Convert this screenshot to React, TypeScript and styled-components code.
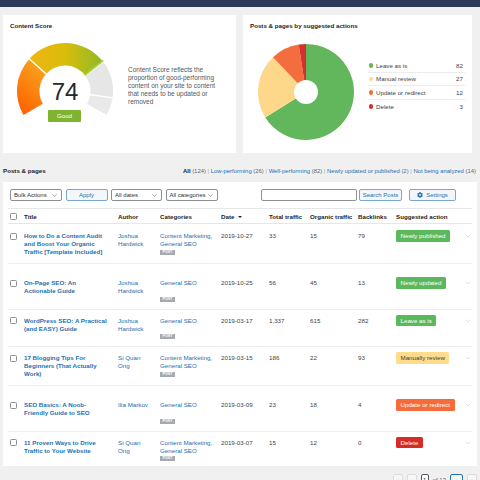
import React from 'react'
import styled, { createGlobalStyle } from 'styled-components'
import { FaCog } from 'react-icons/fa'
import { ChevronDown } from 'lucide-react'

const GlobalStyle = createGlobalStyle`
  html, body {
    margin: 0;
    padding: 0;
    overflow: hidden;
    background: #f0f0f1;
  }
  body {
    font-family: 'Liberation Sans', Arial, sans-serif;
    color: #3c434a;
  }
  * {
    box-sizing: border-box;
  }
`

const Page = styled.div`
  width: 480px;
  height: 480px;
  overflow: hidden;
`

const TopBar = styled.div`
  height: 7px;
  background: #2c3a57;
  overflow: hidden;
  padding-left: 10px;

  span {
    display: block;
    font-size: 8px;
    line-height: 10px;
    margin-top: -7px;
    color: #c6ccd6;
  }
`

const CardsRow = styled.div`
  display: flex;
  gap: 7px;
  padding: 8px 8px 0 3px;
`

const Card = styled.section<{ $w: number }>`
  width: ${(p) => p.$w}px;
  height: 138px;
  background: #fff;
  padding: 7px;
`

const CardTitle = styled.h3`
  margin: 0;
  font-size: 6.2px;
  line-height: 8px;
  font-weight: 700;
  color: #1d2327;
`

const CardBody = styled.div`
  display: flex;
  align-items: flex-start;
`

const GaugeWrap = styled.div`
  position: relative;
  width: 104px;
  height: 82px;
  margin: 11px 0 0 3px;
  flex-shrink: 0;

  svg {
    display: block;
  }
`

const ScoreValue = styled.div`
  position: absolute;
  left: 0;
  right: 0;
  top: 39px;
  text-align: center;
  font-size: 24px;
  line-height: 24px;
  color: #23282d;
`

const ScoreBadge = styled.div`
  position: absolute;
  left: 35px;
  top: 69px;
  width: 33px;
  height: 11.5px;
  border-radius: 1px;
  background: #7fb42f;
  color: #fff;
  font-size: 6.2px;
  line-height: 11.5px;
  text-align: center;
`

const Description = styled.p`
  margin: 36px 0 0 11px;
  width: 92px;
  font-size: 6.5px;
  line-height: 7.9px;
  color: #50575e;
`

const PieSvg = styled.svg`
  display: block;
  flex-shrink: 0;
  margin: 12px 0 0 6px;
`

const Legend = styled.ul`
  list-style: none;
  margin: 29px 0 0 12px;
  padding: 0;
  width: 97px;
`

const LegendRow = styled.li`
  display: flex;
  align-items: center;
  height: 13.5px;
  padding-right: 2px;
  font-size: 6.2px;
  color: #3c434a;
  border-bottom: 1px solid #ececec;

  &:last-child {
    border-bottom: none;
  }
`

const Dot = styled.span<{ $c: string }>`
  width: 4.5px;
  height: 4.5px;
  border-radius: 50%;
  background: ${(p) => p.$c};
  margin: 0 3px 0 0.5px;
`

const LegendLabel = styled.span`
  flex: 1;
`

const SectionHead = styled.div`
  display: flex;
  justify-content: space-between;
  align-items: center;
  margin-top: 14px;
  padding: 0 4px 0 3px;
  height: 8px;
`

const SectionTitle = styled.h2`
  margin: 0;
  font-size: 6.2px;
  line-height: 8px;
  font-weight: 700;
  color: #1d2327;
`

const Filters = styled.div`
  font-size: 5.9px;
  line-height: 8px;
  color: #a7aaad;
  white-space: nowrap;

  a {
    color: #2271b1;
    text-decoration: none;
  }

  b {
    color: #1d2327;
  }

  em {
    font-style: normal;
    color: #646970;
  }
`

const TableCard = styled.section`
  margin: 7px 3px 0;
  height: 284px;
  background: #fff;
  padding: 7px 5px 0;
  overflow: hidden;
`

const Toolbar = styled.div`
  display: flex;
  justify-content: space-between;
  height: 12px;
  padding: 0 16px 0 2px;
`

const ToolGroup = styled.div`
  display: flex;
  gap: 3.5px;
`

const SelectBox = styled.div<{ $w: number }>`
  width: ${(p) => p.$w}px;
  height: 12px;
  border: 1px solid #8c8f94;
  border-radius: 2px;
  background: #fff;
  display: flex;
  align-items: center;
  justify-content: space-between;
  padding: 0 3px;
  font-size: 6px;
  color: #2c3338;
`

const Button = styled.div<{ $w: number }>`
  width: ${(p) => p.$w}px;
  height: 12px;
  border: 1px solid #7aa7d0;
  border-radius: 2px;
  background: #f3f7fb;
  display: flex;
  align-items: center;
  justify-content: center;
  gap: 3px;
  font-size: 6px;
  color: #2271b1;
`

const SettingsButton = styled(Button)`
  margin-left: 3.5px;
`

const SearchInput = styled.div`
  width: 96px;
  height: 12px;
  border: 1px solid #8c8f94;
  border-radius: 2px;
  background: #fff;
  margin-right: -1.5px;
`

const GRID = '14px 94px 42px 61px 48px 41px 48px 38px 67px 1fr'

const HeaderRow = styled.div`
  display: grid;
  grid-template-columns: ${GRID};
  align-items: center;
  height: 16px;
  margin-top: 7px;
  padding-left: 2px;
  border-top: 1px solid #e6e7e9;
  border-bottom: 1px solid #e6e7e9;
  font-size: 6.2px;
  font-weight: 700;
  color: #1d2327;
`

const Caret = styled.span`
  display: inline-block;
  margin-left: 2px;
  border-left: 2px solid transparent;
  border-right: 2px solid transparent;
  border-top: 2.5px solid #1d2327;
  vertical-align: 1px;
`

const Row = styled.div<{ $pt: number }>`
  display: grid;
  grid-template-columns: ${GRID};
  align-items: start;
  padding: ${(p) => p.$pt}px 0 7px 2px;
  border-bottom: 1px solid #eceef0;
  font-size: 6.2px;
  line-height: 8px;

  &:last-child {
    border-bottom: none;
  }
`

const Check = styled.span`
  display: block;
  width: 7px;
  height: 7px;
  margin-top: 0.5px;
  border: 1px solid #8c8f94;
  border-radius: 1.5px;
  background: #fff;
`

const TitleLink = styled.a`
  color: #2271b1;
  font-weight: 700;
  text-decoration: none;
`

const Author = styled.div`
  max-width: 33px;
  color: #2271b1;
`

const Categories = styled.div`
  color: #2271b1;

  div {
    max-width: 56px;
    min-height: 16px;
  }
`

const PostTag = styled.span`
  display: block;
  width: 15px;
  height: 5px;
  margin-top: 1.5px;
  background: #a7aaad;
  color: #fff;
  font-size: 3.6px;
  line-height: 5px;
  font-weight: 700;
  text-align: center;
`

const Num = styled.div`
  color: #3c434a;
`

const ACTIONS: Record<string, { bg: string; fg: string }> = {
  'Newly published': { bg: '#5cb85c', fg: '#fff' },
  'Newly updated': { bg: '#5cb85c', fg: '#fff' },
  'Leave as is': { bg: '#5cb85c', fg: '#fff' },
  'Manually review': { bg: '#fddc8c', fg: '#3c3c3c' },
  'Update or redirect': { bg: '#f56b3a', fg: '#fff' },
  Delete: { bg: '#d52c26', fg: '#fff' },
}

const Badge = styled.span<{ $bg: string; $fg: string }>`
  display: inline-block;
  height: 11.5px;
  margin-top: -1.75px;
  padding: 0 4.5px;
  border-radius: 1.5px;
  background: ${(p) => p.$bg};
  color: ${(p) => p.$fg};
  line-height: 11.5px;
  white-space: nowrap;
`

const Expand = styled.div`
  color: #b4b7ba;
  padding-left: 1px;

  svg {
    display: block;
  }
`

const Pager = styled.div`
  display: flex;
  justify-content: flex-end;
  align-items: center;
  gap: 4px;
  margin-top: 8px;
  padding-right: 3px;
  font-size: 6px;
  color: #646970;
`

const PageBtn = styled.span<{ $active?: boolean }>`
  display: flex;
  align-items: center;
  justify-content: center;
  width: ${(p) => (p.$active ? 13 : 10)}px;
  height: 12px;
  border: 1px solid ${(p) => (p.$active ? '#2271b1' : '#dcdcde')};
  border-radius: 2px;
  background: ${(p) => (p.$active ? '#f6f7f7' : '#f6f7f7')};
  color: ${(p) => (p.$active ? '#2271b1' : '#a7aaad')};
`

const PageInput = styled.span`
  display: flex;
  align-items: center;
  justify-content: center;
  width: 8px;
  height: 12px;
  border: 1px solid #50575e;
  border-radius: 2px;
  background: #fff;
  color: #1d2327;
`

function polar(r: number, deg: number): string {
  const a = (deg * Math.PI) / 180
  return `${(52 + r * Math.cos(a)).toFixed(2)} ${(50 - r * Math.sin(a)).toFixed(2)}`
}

function arc(a1: number, a2: number, R = 48, r = 25.5): string {
  const large = a1 - a2 > 180 ? 1 : 0
  return `M${polar(R, a1)} A${R} ${R} 0 ${large} 1 ${polar(R, a2)} L${polar(r, a2)} A${r} ${r} 0 ${large} 0 ${polar(r, a1)} Z`
}

function Gauge() {
  const dividers = [138, -8]
  return (
    <GaugeWrap>
      <svg width="104" height="82" viewBox="0 0 104 82">
        <defs>
          <linearGradient id="gOrange" x1="0" y1="1" x2="0.5" y2="0">
            <stop offset="0" stopColor="#ff5a00" />
            <stop offset="1" stopColor="#f9a11b" />
          </linearGradient>
          <linearGradient id="gTop" x1="0" y1="0" x2="1" y2="0">
            <stop offset="0" stopColor="#f0b511" />
            <stop offset="0.5" stopColor="#d7bd0c" />
            <stop offset="1" stopColor="#8bbb27" />
          </linearGradient>
        </defs>
        <path d={arc(210, 138)} fill="url(#gOrange)" />
        <path d={arc(138, 37)} fill="url(#gTop)" />
        <path d={arc(37, -8)} fill="#e6e6e6" />
        <path d={arc(-8, -30)} fill="#e9e9e9" />
        {dividers.map((d) => (
          <path key={d} d={`M${polar(25, d)} L${polar(49, d)}`} stroke="#fff" strokeWidth="1.4" />
        ))}
        <path d={`M${polar(25, 37)} L${polar(49, 37)}`} stroke="#fff" strokeWidth="1" />
        <path d={`M${polar(25, 38.6)} L${polar(49, 38.6)}`} stroke="#a9d343" strokeWidth="1.6" />
      </svg>
      <ScoreValue>74</ScoreValue>
      <ScoreBadge>Good</ScoreBadge>
    </GaugeWrap>
  )
}

const SLICES = [
  { label: 'Leave as is', value: 82, color: '#62b65b' },
  { label: 'Manual review', value: 27, color: '#fdd88a' },
  { label: 'Update or redirect', value: 12, color: '#f36d3e' },
  { label: 'Delete', value: 3, color: '#d3302e' },
]

function Pie() {
  const total = SLICES.reduce((s, x) => s + x.value, 0)
  let acc = 0
  const pt = (t: number) => {
    const a = t * 2 * Math.PI
    return `${(50 + 48 * Math.sin(a)).toFixed(2)} ${(50 - 48 * Math.cos(a)).toFixed(2)}`
  }
  return (
    <PieSvg width="100" height="100" viewBox="0 0 100 100">
      {SLICES.map((s) => {
        const from = acc / total
        acc += s.value
        const to = acc / total
        const large = to - from > 0.5 ? 1 : 0
        return <path key={s.label} d={`M50 50 L${pt(from)} A48 48 0 ${large} 1 ${pt(to)} Z`} fill={s.color} />
      })}
      <circle cx="50" cy="50" r="12" fill="#fff" />
    </PieSvg>
  )
}

type Post = {
  title: string[]
  author: string
  cats: string
  date: string
  total: string
  organic: string
  backlinks: string
  action: string
  pt: number
}

const POSTS: Post[] = [
  {
    title: ['How to Do a Content Audit', 'and Boost Your Organic', 'Traffic [Template Included]'],
    author: 'Joshua Hardwick',
    cats: 'Content Marketing, General SEO',
    date: '2019-10-27',
    total: '33',
    organic: '15',
    backlinks: '79',
    action: 'Newly published',
    pt: 8,
  },
  {
    title: ['On-Page SEO: An', 'Actionable Guide'],
    author: 'Joshua Hardwick',
    cats: 'General SEO',
    date: '2019-10-25',
    total: '56',
    organic: '45',
    backlinks: '13',
    action: 'Newly updated',
    pt: 15,
  },
  {
    title: ['WordPress SEO: A Practical', '(and EASY) Guide'],
    author: 'Joshua Hardwick',
    cats: 'General SEO',
    date: '2019-03-17',
    total: '1,337',
    organic: '615',
    backlinks: '282',
    action: 'Leave as is',
    pt: 7,
  },
  {
    title: ['17 Blogging Tips For', 'Beginners (That Actually', 'Work)'],
    author: 'Si Quan Ong',
    cats: 'Content Marketing, General SEO',
    date: '2019-03-15',
    total: '186',
    organic: '22',
    backlinks: '93',
    action: 'Manually review',
    pt: 7,
  },
  {
    title: ['SEO Basics: A Noob-', 'Friendly Guide to SEO'],
    author: 'Ilia Markov',
    cats: 'General SEO',
    date: '2019-03-09',
    total: '23',
    organic: '18',
    backlinks: '4',
    action: 'Update or redirect',
    pt: 15,
  },
  {
    title: ['11 Proven Ways to Drive', 'Traffic to Your Website'],
    author: 'Si Quan Ong',
    cats: 'Content Marketing, General SEO',
    date: '2019-03-07',
    total: '15',
    organic: '12',
    backlinks: '0',
    action: 'Delete',
    pt: 7,
  },
]

const FILTERS = [
  { label: 'Low-performing', count: 26 },
  { label: 'Well-performing', count: 82 },
  { label: 'Newly updated or published', count: 2 },
  { label: 'Not being analyzed', count: 14 },
]

export default function App() {
  return (
    <Page>
      <GlobalStyle />
      <TopBar>
        <span>Ahrefs SEO › Content Audit</span>
      </TopBar>

      {/* Overview cards */}
      <CardsRow>
        <Card $w={233}>
          <CardTitle>Content Score</CardTitle>
          <CardBody>
            <Gauge />
            <Description>
              Content Score reflects the proportion of good-performing content on your site to content that needs to be
              updated or removed
            </Description>
          </CardBody>
        </Card>
        <Card $w={229}>
          <CardTitle>Posts &amp; pages by suggested actions</CardTitle>
          <CardBody>
            <Pie />
            <Legend>
              {SLICES.map((s) => (
                <LegendRow key={s.label}>
                  <Dot $c={s.color} />
                  <LegendLabel>{s.label}</LegendLabel>
                  <span>{s.value}</span>
                </LegendRow>
              ))}
            </Legend>
          </CardBody>
        </Card>
      </CardsRow>

      {/* Posts list */}
      <SectionHead>
        <SectionTitle>Posts &amp; pages</SectionTitle>
        <Filters>
          <b>All</b> <em>(124)</em>
          {FILTERS.map((f) => (
            <React.Fragment key={f.label}>
              {' | '}
              <a href="#">{f.label}</a> <em>({f.count})</em>
            </React.Fragment>
          ))}
        </Filters>
      </SectionHead>

      <TableCard>
        <Toolbar>
          <ToolGroup>
            <SelectBox $w={52}>
              Bulk Actions <ChevronDown size={7} strokeWidth={1.6} />
            </SelectBox>
            <Button $w={42}>Apply</Button>
            <SelectBox $w={51}>
              All dates <ChevronDown size={7} strokeWidth={1.6} />
            </SelectBox>
            <SelectBox $w={52}>
              All categories <ChevronDown size={7} strokeWidth={1.6} />
            </SelectBox>
          </ToolGroup>
          <ToolGroup>
            <SearchInput />
            <Button $w={43}>Search Posts</Button>
            <SettingsButton $w={47}>
              <FaCog size={6} /> Settings
            </SettingsButton>
          </ToolGroup>
        </Toolbar>

        <HeaderRow>
          <Check />
          <span>Title</span>
          <span>Author</span>
          <span>Categories</span>
          <span>
            Date <Caret />
          </span>
          <span>Total traffic</span>
          <span>Organic traffic</span>
          <span>Backlinks</span>
          <span>Suggested action</span>
          <span />
        </HeaderRow>

        {POSTS.map((p) => {
          const a = ACTIONS[p.action]
          return (
            <Row key={p.date} $pt={p.pt}>
              <Check />
              <TitleLink href="#">
                {p.title.map((line, i) => (
                  <React.Fragment key={i}>
                    {i > 0 && <br />}
                    {line}
                  </React.Fragment>
                ))}
              </TitleLink>
              <Author>{p.author}</Author>
              <Categories>
                <div>{p.cats}</div>
                <PostTag>POST</PostTag>
              </Categories>
              <Num>{p.date}</Num>
              <Num>{p.total}</Num>
              <Num>{p.organic}</Num>
              <Num>{p.backlinks}</Num>
              <div>
                <Badge $bg={a.bg} $fg={a.fg}>
                  {p.action}
                </Badge>
              </div>
              <Expand>
                <ChevronDown size={8} strokeWidth={1.3} />
              </Expand>
            </Row>
          )
        })}
      </TableCard>

      <Pager>
        <PageBtn>«</PageBtn>
        <PageBtn>‹</PageBtn>
        <PageInput>1</PageInput>
        <span>of 13</span>
        <PageBtn $active>›</PageBtn>
        <PageBtn>»</PageBtn>
      </Pager>
    </Page>
  )
}
